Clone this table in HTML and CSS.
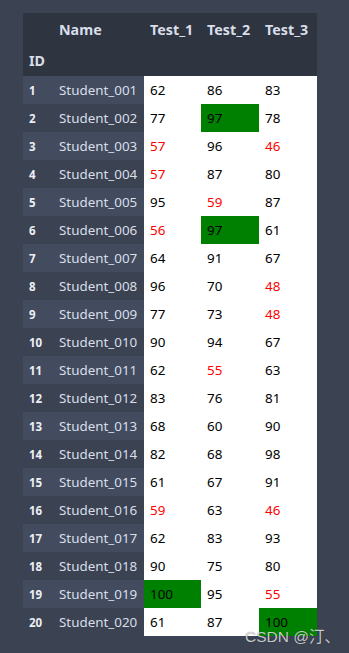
FILE: index.html
```html
<!DOCTYPE html>
<html>
<head>
<meta charset="utf-8">
<link rel="stylesheet" href="styles.css">
</head>
<body>
<div class="wrap">
<table class="grid">
<colgroup>
<col class="c-id"><col class="c-name"><col class="c-t1"><col class="c-t2"><col class="c-t3">
</colgroup>
<thead>
<tr class="h1"><th></th><th>Name</th><th>Test_1</th><th>Test_2</th><th>Test_3</th></tr>
<tr class="h2"><th>ID</th><th></th><th></th><th></th><th></th></tr>
</thead>
<tbody>
<tr><th>1</th><td class="nm">Student_001</td><td>62</td><td>86</td><td>83</td></tr>
<tr><th>2</th><td class="nm">Student_002</td><td>77</td><td class="hi">97</td><td>78</td></tr>
<tr><th>3</th><td class="nm">Student_003</td><td class="lo">57</td><td>96</td><td class="lo">46</td></tr>
<tr><th>4</th><td class="nm">Student_004</td><td class="lo">57</td><td>87</td><td>80</td></tr>
<tr><th>5</th><td class="nm">Student_005</td><td>95</td><td class="lo">59</td><td>87</td></tr>
<tr><th>6</th><td class="nm">Student_006</td><td class="lo">56</td><td class="hi">97</td><td>61</td></tr>
<tr><th>7</th><td class="nm">Student_007</td><td>64</td><td>91</td><td>67</td></tr>
<tr><th>8</th><td class="nm">Student_008</td><td>96</td><td>70</td><td class="lo">48</td></tr>
<tr><th>9</th><td class="nm">Student_009</td><td>77</td><td>73</td><td class="lo">48</td></tr>
<tr><th>10</th><td class="nm">Student_010</td><td>90</td><td>94</td><td>67</td></tr>
<tr><th>11</th><td class="nm">Student_011</td><td>62</td><td class="lo">55</td><td>63</td></tr>
<tr><th>12</th><td class="nm">Student_012</td><td>83</td><td>76</td><td>81</td></tr>
<tr><th>13</th><td class="nm">Student_013</td><td>68</td><td>60</td><td>90</td></tr>
<tr><th>14</th><td class="nm">Student_014</td><td>82</td><td>68</td><td>98</td></tr>
<tr><th>15</th><td class="nm">Student_015</td><td>61</td><td>67</td><td>91</td></tr>
<tr><th>16</th><td class="nm">Student_016</td><td class="lo">59</td><td>63</td><td class="lo">46</td></tr>
<tr><th>17</th><td class="nm">Student_017</td><td>62</td><td>83</td><td>93</td></tr>
<tr><th>18</th><td class="nm">Student_018</td><td>90</td><td>75</td><td>80</td></tr>
<tr><th>19</th><td class="nm">Student_019</td><td class="hi">100</td><td>95</td><td class="lo">55</td></tr>
<tr><th>20</th><td class="nm">Student_020</td><td>61</td><td>87</td><td class="hi">100</td></tr>
</tbody>
</table>
<div class="mark">CSDN @汀、</div>
</div>
</body>
</html>
```
FILE: styles.css
```css
html, body {
  margin: 0;
  padding: 0;
  background: #3b4252;
  width: 349px;
  height: 653px;
  overflow: hidden;
}
.wrap {
  position: relative;
  padding: 13px 0 0 23px;
  height: 640px;
  box-sizing: border-box;
}
.grid {
  border-collapse: collapse;
  table-layout: fixed;
  width: 294px;
  font-family: "Noto Sans", "Open Sans", sans-serif;
  font-size: 13.4px;
}
.c-id { width: 30px; }
.c-name { width: 91px; }
.c-t1 { width: 57px; }
.c-t2 { width: 58px; }
.c-t3 { width: 58px; }
.grid th, .grid td {
  padding: 0 0 0 6px;
  text-align: left;
  white-space: nowrap;
  overflow: hidden;
}
thead th {
  background: #2e3440;
  color: #d8dee9;
  font-weight: bold;
  font-size: 14.3px;
  padding-bottom: 2px;
}
.h1 { height: 32px; }
.h2 { height: 31px; }
tbody tr { height: 28px; }
tbody th {
  font-size: 11.5px;
  font-weight: bold;
  color: #eceff4;
}
tbody td.nm { color: #d8dee9; }
tbody tr:nth-child(odd) th, tbody tr:nth-child(odd) td.nm { background: #434c5e; }
tbody tr:nth-child(even) th, tbody tr:nth-child(even) td.nm { background: #3b4252; }
tbody td { background: #ffffff; color: #000000; }
tbody td.lo { color: #ff0000; }
tbody td.hi { background: #008000; color: #000000; }
.mark {
  position: absolute;
  left: 245px;
  top: 624px;
  font-family: "Liberation Sans", "Noto Sans CJK SC", sans-serif;
  font-size: 15.5px;
  color: rgba(230, 230, 230, 0.85);
  text-shadow: 0 0 1px rgba(0,0,0,0.5);
  white-space: nowrap;
}
```
